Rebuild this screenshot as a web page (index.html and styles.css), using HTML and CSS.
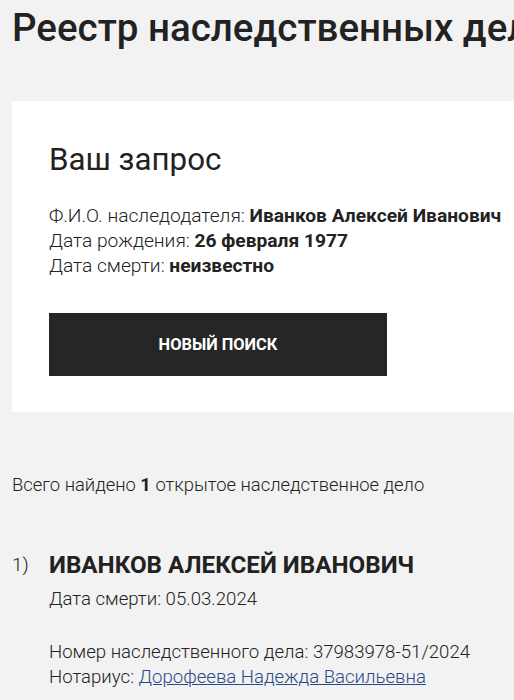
FILE: index.html
```html
<!DOCTYPE html>
<html lang="ru">
<head>
<meta charset="utf-8">
<title>Реестр наследственных дел</title>
<link rel="stylesheet" href="styles.css">
</head>
<body>
<div class="page">
  <h1 class="title">Реестр наследственных дел</h1>
  <section class="card">
    <h2 class="card-title">Ваш запрос</h2>
    <div class="details">
      <div>Ф.И.О. наследодателя: <b>Иванков Алексей Иванович</b></div>
      <div>Дата рождения: <b>26 февраля 1977</b></div>
      <div>Дата смерти: <b>неизвестно</b></div>
    </div>
    <button class="btn">НОВЫЙ ПОИСК</button>
  </section>
  <p class="summary">Всего найдено <b>1</b> открытое наследственное дело</p>
  <div class="result">
    <div class="num">1)</div>
    <div class="result-body">
      <div class="name">ИВАНКОВ АЛЕКСЕЙ ИВАНОВИЧ</div>
      <div class="line">Дата смерти: 05.03.2024</div>
      <div class="block">
        <div class="line">Номер наследственного дела: 37983978-51/2024</div>
        <div class="line">Нотариус: <a href="#" class="link">Дорофеева Надежда Васильевна</a></div>
      </div>
    </div>
  </div>
</div>
</body>
</html>
```

FILE: styles.css
```css
html, body {
  margin: 0;
  padding: 0;
  background: #f2f2f2;
  overflow: hidden;
}
body {
  font-family: Roboto, "Liberation Sans", Arial, sans-serif;
  color: #222;
  font-weight: 300;
}
b { font-weight: 700; }
.page {
  padding-left: 12px;
  width: 700px;
}
.title {
  margin: 0;
  padding-top: 8px;
  font-size: 38.5px;
  font-weight: 500;
  line-height: 40px;
  white-space: nowrap;
  color: #222;
}
.card {
  background: #fff;
  margin-top: 53px;
  padding: 42px 37px 36px;
}
.card-title {
  margin: 0;
  font-size: 31.3px;
  font-weight: 400;
  line-height: 34px;
}
.details {
  margin-top: 26px;
  font-size: 19.2px;
  line-height: 25px;
}
.btn {
  display: block;
  margin-top: 35px;
  width: 338px;
  height: 63px;
  border: 0;
  background: #262626;
  color: #fff;
  font-family: Roboto, "Liberation Sans", Arial, sans-serif;
  font-size: 16.4px;
  font-weight: 700;
  padding: 0;
}
.summary {
  margin: 61px 0 0;
  font-size: 18.4px;
  line-height: 24px;
}
.result {
  display: flex;
  margin-top: 53px;
}
.num {
  width: 37px;
  font-size: 19px;
  line-height: 30px;
}
.name {
  font-size: 24.2px;
  font-weight: 700;
  line-height: 30px;
}
.line {
  font-size: 18.6px;
  line-height: 25px;
}
.result-body > .line { margin-top: 7px; }
.block { margin-top: 28px; }
.link {
  color: #2b4a8b;
  text-decoration: underline;
}
```
